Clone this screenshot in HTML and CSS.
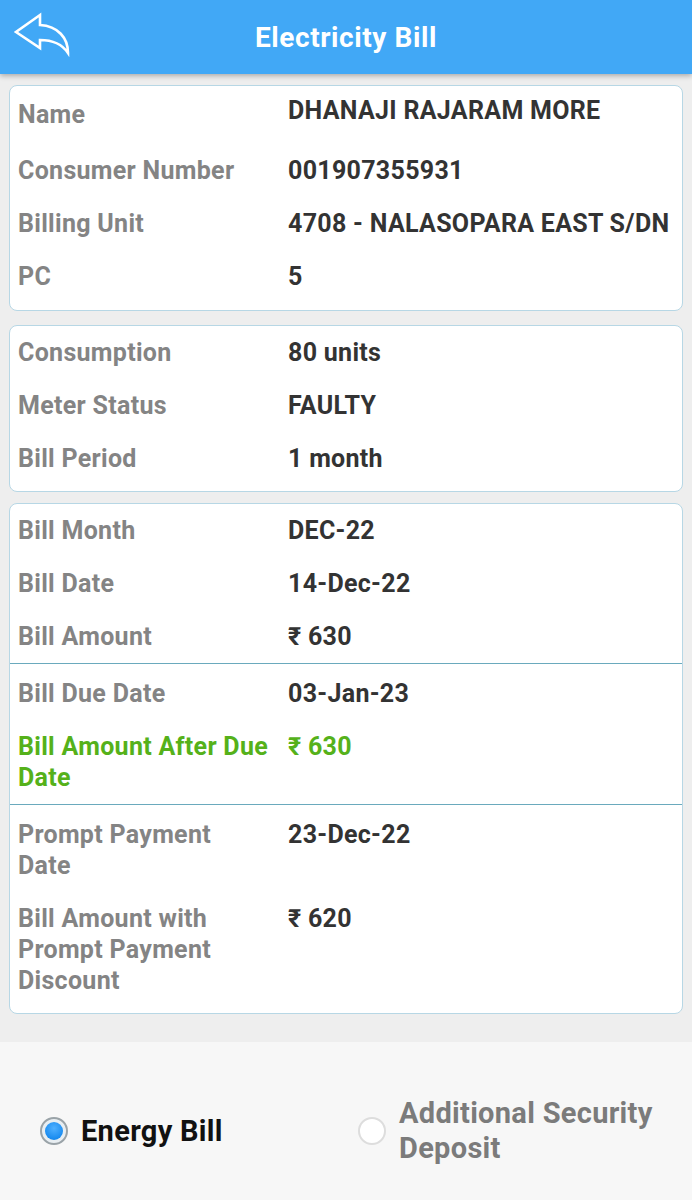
FILE: index.html
```html
<!DOCTYPE html>
<html>
<head>
<meta charset="utf-8">
<link rel="stylesheet" href="styles.css">
</head>
<body>
<header class="appbar">
  <svg class="back" width="60" height="50" viewBox="10 8 60 50" aria-hidden="true">
    <path d="M40 15 L16 32 L40 48 L40 40 C52 40 62 44 68 53 C68 38 58 26 40 25 Z" fill="none" stroke="#fff" stroke-width="2.6" stroke-linejoin="miter"/>
  </svg>
  <h1 class="title">Electricity Bill</h1>
</header>

<main class="content">
  <section class="card card-one">
    <div class="row row-name"><div class="label">Name</div><div class="value">DHANAJI RAJARAM MORE</div></div>
    <div class="row"><div class="label">Consumer Number</div><div class="value">001907355931</div></div>
    <div class="row"><div class="label">Billing Unit</div><div class="value">4708 - NALASOPARA EAST S/DN</div></div>
    <div class="row"><div class="label">PC</div><div class="value">5</div></div>
  </section>

  <section class="card card-two">
    <div class="row"><div class="label">Consumption</div><div class="value">80 units</div></div>
    <div class="row"><div class="label">Meter Status</div><div class="value">FAULTY</div></div>
    <div class="row"><div class="label">Bill Period</div><div class="value">1 month</div></div>
  </section>

  <section class="card card-three">
    <div class="group group-a">
      <div class="row"><div class="label">Bill Month</div><div class="value">DEC-22</div></div>
      <div class="row"><div class="label">Bill Date</div><div class="value">14-Dec-22</div></div>
      <div class="row"><div class="label">Bill Amount</div><div class="value">₹ 630</div></div>
    </div>
    <div class="group group-b">
      <div class="row"><div class="label">Bill Due Date</div><div class="value">03-Jan-23</div></div>
      <div class="row row-green"><div class="label">Bill Amount After Due Date</div><div class="value">₹ 630</div></div>
    </div>
    <div class="group group-c">
      <div class="row"><div class="label">Prompt Payment Date</div><div class="value">23-Dec-22</div></div>
      <div class="row"><div class="label">Bill Amount with Prompt Payment Discount</div><div class="value">₹ 620</div></div>
    </div>
  </section>
</main>

<footer class="choices">
  <label class="option option-on"><span class="radio radio-on"><span class="dot"></span></span><span class="opt-text">Energy Bill</span></label>
  <label class="option option-off"><span class="radio radio-off"></span><span class="opt-text">Additional Security Deposit</span></label>
</footer>
</body>
</html>
```

FILE: styles.css
```css
* { box-sizing: border-box; }
html, body { margin: 0; padding: 0; }
body {
  width: 692px;
  height: 1200px;
  background: #eeeeee;
  font-family: Roboto, "Liberation Sans", Arial, sans-serif;
  overflow: hidden;
  display: flex;
  flex-direction: column;
}

.appbar {
  flex: none;
  height: 74px;
  background: #41a8f6;
  display: flex;
  align-items: center;
  justify-content: center;
  position: relative;
  box-shadow: 0 2px 5px rgba(0,0,0,0.28);
  z-index: 2;
}
.back {
  position: absolute;
  left: 10px;
  top: 8px;
}
.title {
  margin: 0;
  color: #ffffff;
  font-size: 28px;
  font-weight: 700;
  letter-spacing: 0.6px;
}

.content {
  flex: none;
  padding: 11px 9px 0 9px;
}
.card {
  background: #ffffff;
  border: 1px solid #b7d7e5;
  border-radius: 8px;
}
.card-one { padding-bottom: 7px; }
.card-two { margin-top: 14px; padding-bottom: 6px; }
.card-three { margin-top: 11px; }

.row {
  display: grid;
  grid-template-columns: 270px 1fr;
  padding: 11px 8px;
  line-height: 31px;
  font-size: 25px;
  font-weight: 700;
  letter-spacing: 0.3px;
}
.label { color: #848484; padding-right: 18px; }
.value { color: #333333; }

.row-name { padding-top: 9px; padding-bottom: 14px; }
.row-name .label { margin-top: 4px; }

.group-b { border-top: 1px solid #6aaabd; padding-top: 3px; }
.group-c { border-top: 1px solid #6aaabd; padding-top: 3px; padding-bottom: 6px; }

.row-green .label, .row-green .value { color: #55b11a; }

.choices {
  flex: 1;
  margin-top: 28px;
  background: #f7f7f7;
  display: grid;
  grid-template-columns: 318px 1fr;
  align-items: center;
  padding: 20px 16px 0 40px;
}
.option {
  display: flex;
  align-items: center;
  gap: 13px;
  font-size: 29px;
  font-weight: 700;
  line-height: 35px;
  letter-spacing: 0.3px;
}
.option-on .opt-text { color: #111111; }
.option-off .opt-text { color: #7b7b7b; }
.radio {
  flex: none;
  width: 28px;
  height: 28px;
  border-radius: 50%;
  display: flex;
  align-items: center;
  justify-content: center;
}
.radio-on {
  background: #e8eef2;
  border: 2px solid #9aa3a8;
}
.dot {
  width: 18px;
  height: 18px;
  border-radius: 50%;
  background: radial-gradient(circle at 50% 35%, #4fb0ff 0%, #1a8cf0 70%, #1479d6 100%);
}
.radio-off {
  background: #ffffff;
  border: 2px solid #dddddd;
}
```
